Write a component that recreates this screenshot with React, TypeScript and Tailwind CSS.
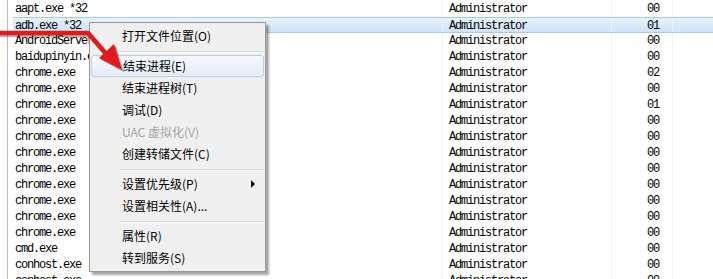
import React from "react";

const names = [
  "aapt.exe *32",
  "adb.exe *32",
  "AndroidServer.exe",
  "baidupinyin.exe",
  ...Array(11).fill("chrome.exe"),
  "cmd.exe",
  "conhost.exe",
  "conhost.exe",
];

const nums = ["00", "01", "00", "00", "02", "00", "01", "00", "00", "00", "00", "00", "00", "00", "00", "00", "00", "00"];

type MenuEntry =
  | { kind: "item"; label: string; active?: boolean; disabled?: boolean; sub?: boolean }
  | { kind: "sep" };

const menu: MenuEntry[] = [
  { kind: "item", label: "打开文件位置(O)" },
  { kind: "sep" },
  { kind: "item", label: "结束进程(E)", active: true },
  { kind: "item", label: "结束进程树(T)" },
  { kind: "item", label: "调试(D)" },
  { kind: "item", label: "UAC 虚拟化(V)", disabled: true },
  { kind: "item", label: "创建转储文件(C)" },
  { kind: "sep" },
  { kind: "item", label: "设置优先级(P)", sub: true },
  { kind: "item", label: "设置相关性(A)..." },
  { kind: "sep" },
  { kind: "item", label: "属性(R)" },
  { kind: "item", label: "转到服务(S)" },
];

const mono = "font-['Liberation_Mono','DejaVu_Sans_Mono',monospace] text-[12px] tracking-[-1.2px] text-black";
const cjk = "font-['Segoe_UI','Noto_Sans_CJK_SC','Noto_Sans',sans-serif] text-[12px]";

function ProcessRow({ name, num, selected }: { name: string; num: string; selected: boolean }) {
  return (
    <div
      className={`flex h-[16px] items-center leading-[16px] ${mono} ${
        selected ? "border-y border-[#a9c8ec] bg-gradient-to-b from-[#e9f2fc] to-[#cfe2f7]" : ""
      }`}
    >
      <div className="w-[430px] shrink-0 pl-[2px] border-r border-[#f3f3f3] h-full">{name}</div>
      <div className="w-[169px] shrink-0 pl-[6px] border-r border-[#f3f3f3] h-full">Administrator</div>
      <div className="w-[61px] shrink-0 pr-[13px] text-right border-r border-[#f3f3f3] h-full">{num}</div>
      <div className="flex-1 h-full" />
    </div>
  );
}

function ContextMenu() {
  return (
    <div className="absolute left-[89px] top-[22px] w-[177px] border border-[#979797] bg-[#f0f0f0] px-[1px] py-[2px] shadow-[3px_3px_2px_rgba(0,0,0,0.35)]">
      {menu.map((m, i) =>
        m.kind === "sep" ? (
          <div key={i} className="h-[8px] pt-[4px] pl-[28px]">
            <div className="h-px bg-[#d7d7d7]" />
            <div className="h-px bg-white" />
          </div>
        ) : (
          <div
            key={i}
            className={`relative flex h-[22px] items-center pl-[31px] leading-[22px] ${cjk} ${
              m.disabled ? "text-[#a3a3a3]" : "text-black"
            } ${
              m.active
                ? "rounded-[3px] border border-[#bcd0e8] bg-gradient-to-b from-[#f6f9fd] to-[#e4ecf6] pl-[30px]"
                : ""
            }`}
          >
            {m.label}
            {m.sub && (
              <svg className="absolute right-[9px] top-[7px]" width="4" height="8" viewBox="0 0 4 8">
                <polygon points="0,0 4,4 0,8" fill="#000" />
              </svg>
            )}
          </div>
        )
      )}
    </div>
  );
}

function RedArrow() {
  return (
    <svg className="absolute left-0 top-0" width="140" height="90" viewBox="0 0 140 90">
      <g transform="translate(2,2)" opacity="0.3">
        <polyline points="-2,33 88,33 107,55" fill="none" stroke="#000" strokeWidth="4.5" />
        <polygon points="122,70 99,58 114,44" fill="#000" />
      </g>
      <polyline points="-2,33 88,33 107,55" fill="none" stroke="#e11b1b" strokeWidth="4.5" strokeLinejoin="round" />
      <polygon points="122,70 99,58 114,44" fill="#e11b1b" />
    </svg>
  );
}

export default function App() {
  return (
    <div className="relative h-[279px] w-[713px] overflow-hidden bg-white">
      <div className="ml-[7px] h-full border-l border-[#bcbcbc] pl-[5px] pt-[1px]">
        {names.map((n, i) => (
          <ProcessRow key={i} name={n} num={nums[i]} selected={i === 1} />
        ))}
      </div>
      <ContextMenu />
      <RedArrow />
    </div>
  );
}
